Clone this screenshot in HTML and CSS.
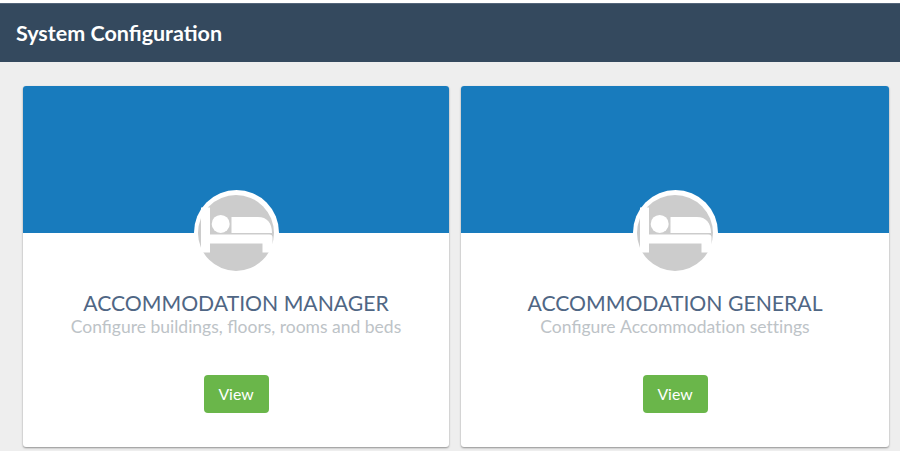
FILE: index.html
```html
<!DOCTYPE html>
<html>
<head>
    <meta charset="utf-8">
    <title>System Configuration</title>
    <link rel="stylesheet" href="styles.css">
</head>
<body>

<div class="page-header">
    <h1>System Configuration</h1>
</div>

<div class="cards">
    <div class="card">
        <div class="card-top"></div>
        <div class="avatar">
            <svg viewBox="0 0 76 76">
                <circle class="disc" cx="38" cy="38" r="38"/>
                <path d="M3 12.5h9V39.5H71.5q3 0 3 3V57.5H64.5V48.5H12V57.5H3z"/>
                <circle cx="22.7" cy="28.9" r="9"/>
                <path d="M33.5 22H60C69 22 74 28 74 38H33.5z"/>
            </svg>
        </div>
        <div class="card-info">
            <div class="title">ACCOMMODATION MANAGER</div>
            <div class="desc">Configure buildings, floors, rooms and beds</div>
        </div>
        <div class="card-bottom">
            <button class="btn">View</button>
        </div>
    </div>

    <div class="card">
        <div class="card-top"></div>
        <div class="avatar">
            <svg viewBox="0 0 76 76">
                <circle class="disc" cx="38" cy="38" r="38"/>
                <path d="M3 12.5h9V39.5H71.5q3 0 3 3V57.5H64.5V48.5H12V57.5H3z"/>
                <circle cx="22.7" cy="28.9" r="9"/>
                <path d="M33.5 22H60C69 22 74 28 74 38H33.5z"/>
            </svg>
        </div>
        <div class="card-info">
            <div class="title">ACCOMMODATION GENERAL</div>
            <div class="desc">Configure <span class="no-liga">Accommodation settings</span></div>
        </div>
        <div class="card-bottom">
            <button class="btn">View</button>
        </div>
    </div>
</div>

</body>
</html>
```

FILE: styles.css
```css
* {
    box-sizing: border-box;
}

body {
    margin: 0;
    height: 451px;
    overflow: hidden;
    border-top: 3px solid #fff;
    background-color: #eee;
    font-family: Lato, sans-serif;
}

.page-header {
    height: 59px;
    padding: 0 16px;
    display: flex;
    align-items: center;
    background-color: #34495e;
    border-top: 1px solid #53657a;
}

.page-header h1 {
    margin: 0;
    color: #fff;
    font-size: 21.5px;
    line-height: 26px;
    font-weight: bold;
}

.cards {
    display: grid;
    grid-template-columns: 426px 1fr;
    gap: 12px;
    padding: 24px 11px 0 23px;
}

.card {
    height: 361px;
    display: flex;
    flex-direction: column;
    align-items: center;
    background-color: #fff;
    border-radius: 3px;
    box-shadow: 0 1px 2px rgba(0, 0, 0, 0.4);
    text-align: center;
}

.card-top {
    width: 100%;
    height: 147px;
    flex: none;
    background-color: #187bbd;
    border-radius: 3px 3px 0 0;
}

.avatar {
    width: 85px;
    height: 85px;
    flex: none;
    margin-top: -43px;
    padding: 4.5px;
    border-radius: 50%;
    background-color: #fff;
}

.avatar svg {
    display: block;
    width: 76px;
    height: 76px;
    fill: #fff;
}

.avatar .disc {
    fill: #ccc;
}

.card-info {
    margin-top: 15px;
}

.title {
    color: #4f6684;
    font-size: 21.2px;
    line-height: 26px;
}

.desc {
    color: #bdc3c7;
    font-size: 17.5px;
    line-height: 21px;
}

.no-liga {
    font-variant-ligatures: none;
}

.card-bottom {
    margin-top: 38px;
}

.btn {
    display: block;
    width: 65px;
    height: 38px;
    padding: 0 0 2px;
    border: none;
    border-radius: 4px;
    background-color: #6ab64a;
    color: #fff;
    font-family: inherit;
    font-size: 15.8px;
    cursor: pointer;
}
```
